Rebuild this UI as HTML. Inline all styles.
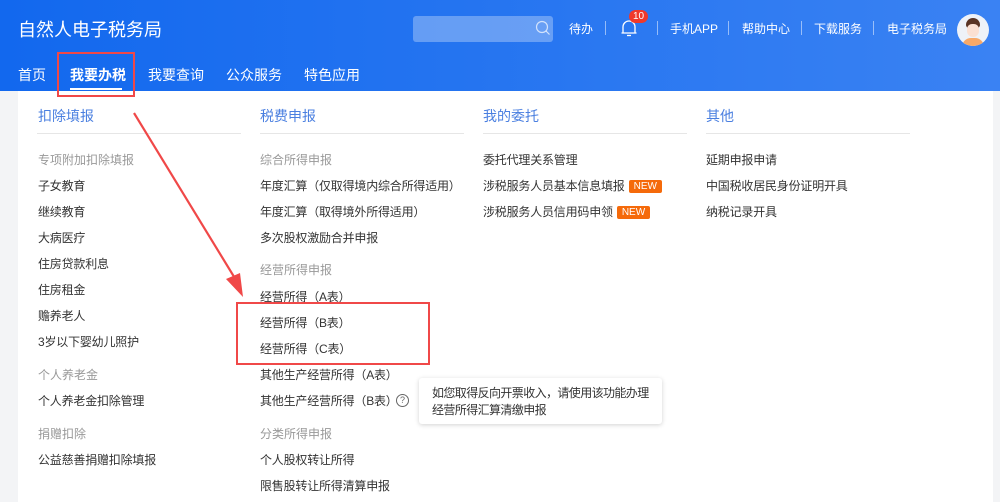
<!DOCTYPE html>
<html><head><meta charset="utf-8"><style>
*{margin:0;padding:0;box-sizing:border-box}
body{width:1000px;height:502px;overflow:hidden;background:#f3f4f6;font-family:"Liberation Sans","Noto Sans CJK SC",sans-serif;position:relative}
.hd{position:absolute;left:0;top:0;width:1000px;height:91px;background:linear-gradient(90deg,#1268ee,#3a82f3)}
.a{position:absolute;white-space:nowrap;line-height:16px}
.w{color:#fff}
.panel{position:absolute;left:18px;top:91px;width:975px;height:411px;background:#fff}
.i{font-size:12px;color:#333;letter-spacing:-0.2px}
.g{font-size:12px;color:#999}
.h{font-size:14px;color:#4a7fe0}
.ln{position:absolute;height:1px;background:#e6e6e6;width:204px;top:133px}
.new{display:inline-block;background:#f56a0a;color:#fff;font-size:10px;line-height:13px;padding:0 5px;border-radius:2px;margin-left:4px;vertical-align:1px;letter-spacing:0}
.sep{position:absolute;top:21px;width:1px;height:14px;background:rgba(255,255,255,.5)}
.tr{font-size:12px;color:#fff}
</style></head><body>
<div class="hd"></div>
<div class="a w" style="left:18px;top:19px;font-size:18px;line-height:22px">自然人电子税务局</div>
<div style="position:absolute;left:413px;top:16px;width:140px;height:26px;border-radius:3px;background:rgba(255,255,255,.3)"></div>
<svg style="position:absolute;left:535px;top:20px" width="16" height="16" viewBox="0 0 16 16"><circle cx="7" cy="7" r="5.5" fill="none" stroke="#fff" stroke-opacity=".7" stroke-width="1.2"/><line x1="11" y1="11" x2="14.5" y2="14.5" stroke="#fff" stroke-opacity=".7" stroke-width="1.2"/></svg>
<div class="a tr" style="left:569px;top:21px">待办</div>
<div class="sep" style="left:605px"></div>
<svg style="position:absolute;left:620px;top:18px" width="18" height="20" viewBox="0 0 18 20"><path d="M3 15V9a6 6 0 0 1 12 0v6h1.5M3 15H1.5M1.5 15h15" fill="none" stroke="#fff" stroke-width="1.3"/><path d="M7 17.5h4" stroke="#fff" stroke-width="1.3"/></svg>
<div style="position:absolute;left:629px;top:10px;width:19px;height:13px;border-radius:7px;background:#f0392b;color:#fff;font-size:10px;line-height:13px;text-align:center">10</div>
<div class="sep" style="left:657px"></div>
<div class="a tr" style="left:670px;top:21px">手机APP</div>
<div class="sep" style="left:728px"></div>
<div class="a tr" style="left:742px;top:21px">帮助中心</div>
<div class="sep" style="left:801px"></div>
<div class="a tr" style="left:814px;top:21px">下载服务</div>
<div class="sep" style="left:873px"></div>
<div class="a tr" style="left:887px;top:21px">电子税务局</div>
<div style="position:absolute;left:957px;top:14px;width:32px;height:32px;border-radius:50%;background:#eef2f8;overflow:hidden">
<div style="position:absolute;left:9px;top:4px;width:14px;height:10px;border-radius:7px 7px 3px 3px;background:#5a3424"></div>
<div style="position:absolute;left:10px;top:10px;width:12px;height:13px;border-radius:5px 5px 6px 6px;background:#fbe0d2"></div>
<div style="position:absolute;left:5px;top:24px;width:22px;height:12px;border-radius:9px 9px 0 0;background:#f7a868"></div></div>
<div class="a w" style="left:18px;top:67px;font-size:14px">首页</div>
<div class="a w" style="left:70px;top:67px;font-size:14px;font-weight:bold">我要办税</div>
<div style="position:absolute;left:70px;top:88px;width:52px;height:2px;background:#fff"></div>
<div class="a w" style="left:148px;top:67px;font-size:14px">我要查询</div>
<div class="a w" style="left:226px;top:67px;font-size:14px">公众服务</div>
<div class="a w" style="left:304px;top:67px;font-size:14px">特色应用</div>
<div class="panel"></div>
<div class="a h" style="left:38px;top:108px">扣除填报</div><div class="ln" style="left:37px"></div>
<div class="a h" style="left:260px;top:108px">税费申报</div><div class="ln" style="left:260px"></div>
<div class="a h" style="left:483px;top:108px">我的委托</div><div class="ln" style="left:483px"></div>
<div class="a h" style="left:706px;top:108px">其他</div><div class="ln" style="left:706px"></div>

<div class="a g" style="left:38px;top:152px">专项附加扣除填报</div>
<div class="a i" style="left:38px;top:178px">子女教育</div>
<div class="a i" style="left:38px;top:204px">继续教育</div>
<div class="a i" style="left:38px;top:230px">大病医疗</div>
<div class="a i" style="left:38px;top:256px">住房贷款利息</div>
<div class="a i" style="left:38px;top:282px">住房租金</div>
<div class="a i" style="left:38px;top:308px">赡养老人</div>
<div class="a i" style="left:38px;top:334px">3岁以下婴幼儿照护</div>
<div class="a g" style="left:38px;top:367px">个人养老金</div>
<div class="a i" style="left:38px;top:393px">个人养老金扣除管理</div>
<div class="a g" style="left:38px;top:426px">捐赠扣除</div>
<div class="a i" style="left:38px;top:452px">公益慈善捐赠扣除填报</div>

<div class="a g" style="left:260px;top:152px">综合所得申报</div>
<div class="a i" style="left:260px;top:178px">年度汇算（仅取得境内综合所得适用）</div>
<div class="a i" style="left:260px;top:204px">年度汇算（取得境外所得适用）</div>
<div class="a i" style="left:260px;top:230px">多次股权激励合并申报</div>
<div class="a g" style="left:260px;top:262px">经营所得申报</div>
<div class="a i" style="left:260px;top:289px">经营所得（A表）</div>
<div class="a i" style="left:260px;top:315px">经营所得（B表）</div>
<div class="a i" style="left:260px;top:341px">经营所得（C表）</div>
<div class="a i" style="left:260px;top:367px">其他生产经营所得（A表）</div>
<div class="a i" style="left:260px;top:393px">其他生产经营所得（B表）</div>
<div style="position:absolute;left:396px;top:394px;width:13px;height:13px;border:1px solid #666;border-radius:50%;font-size:9px;line-height:11px;text-align:center;color:#666">?</div>
<div class="a g" style="left:260px;top:426px">分类所得申报</div>
<div class="a i" style="left:260px;top:452px">个人股权转让所得</div>
<div class="a i" style="left:260px;top:478px">限售股转让所得清算申报</div>

<div class="a i" style="left:483px;top:152px">委托代理关系管理</div>
<div class="a i" style="left:483px;top:178px">涉税服务人员基本信息填报<span class="new">NEW</span></div>
<div class="a i" style="left:483px;top:204px">涉税服务人员信用码申领<span class="new">NEW</span></div>
<div class="a i" style="left:706px;top:152px">延期申报申请</div>
<div class="a i" style="left:706px;top:178px">中国税收居民身份证明开具</div>
<div class="a i" style="left:706px;top:204px">纳税记录开具</div>

<div style="position:absolute;left:419px;top:378px;width:243px;height:46px;background:#fff;border-radius:3px;box-shadow:0 1px 5px rgba(0,0,0,.18)"></div>
<div class="a i" style="left:432px;top:385px;line-height:17px;letter-spacing:-0.6px">如您取得反向开票收入，请使用该功能办理<br>经营所得汇算清缴申报</div>

<div style="position:absolute;left:57px;top:52px;width:78px;height:45px;border:2px solid #f04848"></div>
<div style="position:absolute;left:236px;top:302px;width:194px;height:63px;border:2px solid #f04848"></div>
<svg style="position:absolute;left:0;top:0" width="1000" height="502"><line x1="134" y1="113" x2="236" y2="280" stroke="#f04848" stroke-width="2.2"/><polygon points="243,297 226,279 240,273" fill="#f04848"/></svg>
</body></html>
